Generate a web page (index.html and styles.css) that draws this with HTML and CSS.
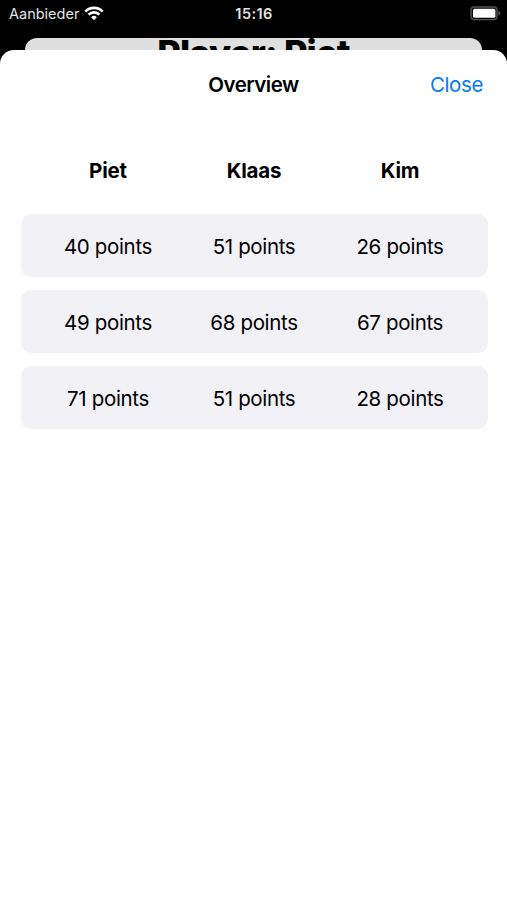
FILE: index.html
```html
<!DOCTYPE html>
<html lang="nl">
<head>
    <meta charset="UTF-8">
    <meta name="viewport" content="width=device-width, initial-scale=1.0">
    <title>Overview</title>
    <link rel="stylesheet" href="styles.css">
</head>
<body>
    <div class="status-bar">
        <div class="carrier">
            <span>Aanbieder</span>
            <svg class="wifi" viewBox="0 0 20 15" width="20" height="15">
                <path d="M1.4 5.6A11.8 11.8 0 0 1 18.6 5.6" />
                <path d="M4.6 8.7A7.5 7.5 0 0 1 15.4 8.7" />
                <path class="wifi-dot" d="M10 14.2L7.1 11.3A4.1 4.1 0 0 1 12.9 11.3Z" />
            </svg>
        </div>
        <div class="time">15:16</div>
        <svg class="battery" viewBox="0 0 31 15" width="31" height="15">
            <rect class="battery-case" x="1" y="1" width="26" height="12.6" rx="3.4" />
            <rect class="battery-level" x="3" y="2.8" width="22.4" height="9" rx="1.6" />
            <path class="battery-tip" d="M28.4 4.8Q30.4 5.6 30.4 7.3T28.4 9.8Z" />
        </svg>
    </div>

    <div class="back-sheet">
        <div class="player">Player: Piet</div>
    </div>

    <div class="sheet">
        <div class="nav">
            <div class="title">Overview</div>
            <button class="close">Close</button>
        </div>
        <div class="row names">
            <div>Piet</div>
            <div>Klaas</div>
            <div>Kim</div>
        </div>
        <div class="scores">
            <div class="row score">
                <div>40 points</div>
                <div>51 points</div>
                <div>26 points</div>
            </div>
            <div class="row score">
                <div>49 points</div>
                <div>68 points</div>
                <div>67 points</div>
            </div>
            <div class="row score">
                <div>71 points</div>
                <div>51 points</div>
                <div>28 points</div>
            </div>
        </div>
    </div>
</body>
</html>
```

FILE: styles.css
```css
body {
    font-family: Inter, 'Liberation Sans', sans-serif;
    background: #000;
    color: #000;
    margin: 0;
    height: 100vh;
    display: flex;
    flex-direction: column;
    overflow: hidden;
}
.status-bar {
    display: grid;
    grid-template-columns: 1fr auto 1fr;
    align-items: center;
    height: 27px;
    padding: 0 6px 11px 9px;
    color: #e4e4e4;
    font-size: 14.5px;
}
.carrier {
    display: flex;
    align-items: center;
    gap: 5px;
}
.wifi {
    fill: none;
    stroke: #fff;
    stroke-width: 2.6;
}
.wifi-dot {
    fill: #fff;
    stroke: none;
}
.time {
    font-weight: 600;
    letter-spacing: 0.4px;
    margin-right: 2px;
}
.battery {
    justify-self: end;
}
.battery-case {
    fill: none;
    stroke: #555;
    stroke-width: 1.4;
}
.battery-level {
    fill: #fff;
}
.battery-tip {
    fill: #555;
}
.back-sheet {
    height: 12px;
    margin: 0 25px;
    background: #dfdfdf;
    border-radius: 12px 12px 0 0;
    overflow: hidden;
    text-align: center;
}
.player {
    font-size: 36px;
    font-weight: 800;
    letter-spacing: -0.8px;
    line-height: 31px;
}
.sheet {
    flex: 1;
    background: #fff;
    border-radius: 14px 14px 0 0;
}
.nav {
    display: grid;
    grid-template-columns: 1fr auto 1fr;
    align-items: center;
    height: 69px;
    padding: 0 24px;
}
.title {
    grid-column: 2;
    font-size: 20.5px;
    font-weight: 600;
    letter-spacing: -0.5px;
}
.close {
    justify-self: end;
    background: none;
    border: none;
    padding: 0;
    color: #007aff;
    font-family: inherit;
    font-size: 20.5px;
    letter-spacing: -0.4px;
    cursor: pointer;
}
.row {
    display: grid;
    grid-template-columns: repeat(3, 1fr);
    align-items: center;
    text-align: center;
    margin: 0 19.5px 0 20.5px;
    padding: 0 14.5px;
    font-size: 20.5px;
    letter-spacing: -0.35px;
}
.names {
    height: 103px;
    font-weight: 700;
    letter-spacing: -0.2px;
}
.scores {
    display: flex;
    flex-direction: column;
    gap: 12.6px;
    margin-top: -8px;
}
.score {
    height: 62.4px;
    padding-top: 1px;
    background: #f1f1f6;
    border-radius: 10px;
}
```
